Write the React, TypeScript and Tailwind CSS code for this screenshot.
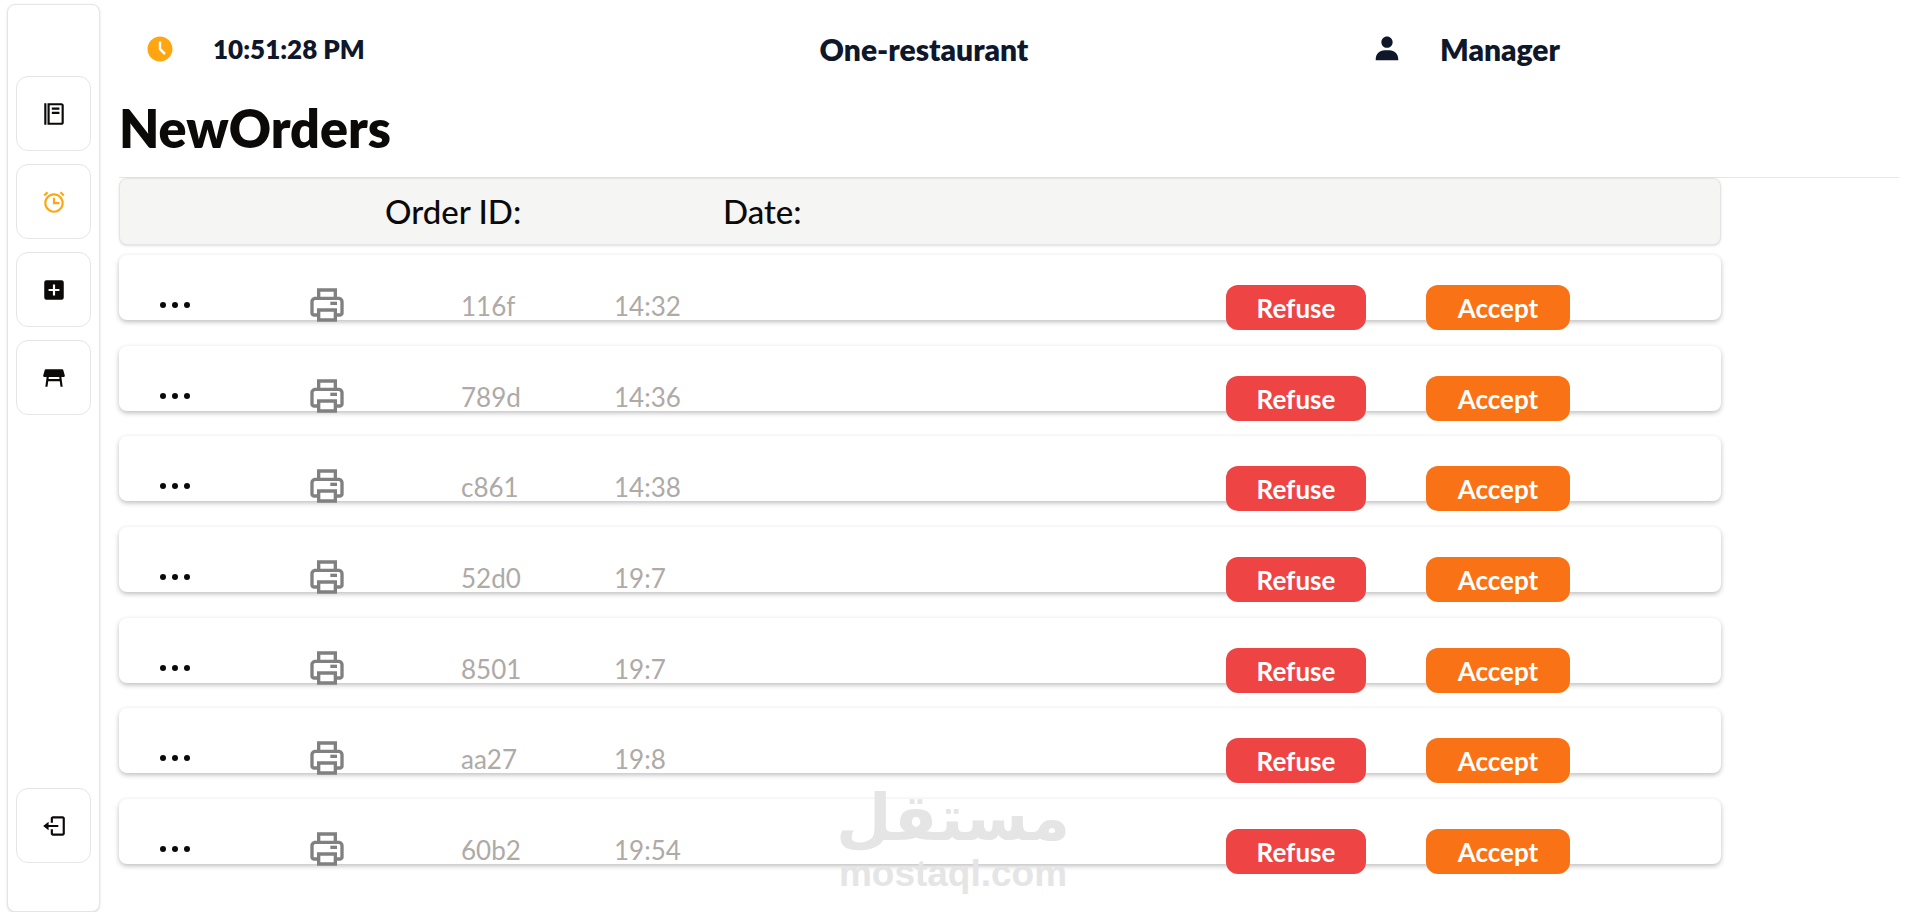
import React from 'react';
import {
  BiAlarm,
  BiFoodMenu,
  BiLogOut,
  BiPrinter,
  BiSolidPlusSquare,
  BiSolidTimeFive,
  BiSolidUser,
} from 'react-icons/bi';
import { MdTableRestaurant } from 'react-icons/md';

interface Order {
  id: string;
  time: string;
}

const ORDERS: Order[] = [
  { id: '116f', time: '14:32' },
  { id: '789d', time: '14:36' },
  { id: 'c861', time: '14:38' },
  { id: '52d0', time: '19:7' },
  { id: '8501', time: '19:7' },
  { id: 'aa27', time: '19:8' },
  { id: '60b2', time: '19:54' },
];

interface NavButtonProps {
  label: string;
  active?: boolean;
  className?: string;
  children: React.ReactNode;
}

const NavButton: React.FC<NavButtonProps> = ({ label, active, className = '', children }) => (
  <button
    type="button"
    aria-label={label}
    className={`flex h-[75px] w-[75px] items-center justify-center rounded-xl border border-neutral-200 bg-white ${active ? 'text-[#ffa50f]' : 'text-stone-950'} ${className}`}
  >
    {children}
  </button>
);

const Sidebar: React.FC = () => (
  <nav className="mt-1 ml-[7px] flex w-[93px] shrink-0 flex-col items-center gap-[13px] rounded-lg border border-neutral-200 bg-white pt-[71px] pb-12 shadow">
    <NavButton label="Menu"><BiFoodMenu size={26} /></NavButton>
    <NavButton label="New orders" active><BiAlarm size={26} /></NavButton>
    <NavButton label="Add order"><BiSolidPlusSquare size={26} /></NavButton>
    <NavButton label="Tables"><MdTableRestaurant size={26} /></NavButton>
    <NavButton label="Log out" className="mt-auto"><BiLogOut size={26} /></NavButton>
  </nav>
);

const Header: React.FC = () => (
  <header className="mr-[170px] grid h-[98px] grid-cols-[1fr_auto_1fr] items-center text-[30px] font-extrabold text-slate-900">
    <div className="flex items-center pl-[26px]">
      <BiSolidTimeFive size={30} className="text-[#ffa50f]" />
      <span className="ml-[38px] text-[26px]">10:51:28 PM</span>
    </div>
    <span>One-restaurant</span>
    <div className="flex items-center justify-end pr-[169px]">
      <BiSolidUser size={30} />
      <span className="ml-[38px]">Manager</span>
    </div>
  </header>
);

const OrderRow: React.FC<{ order: Order }> = ({ order }) => (
  <li className="flex h-[65px] items-start rounded-lg bg-white pt-[30px] pr-[151px] pl-10 text-[26px] shadow-[0_2px_5px_rgba(0,0,0,0.26)]">
    <button type="button" aria-label="Order details" className="flex h-10 w-8 items-center">
      <svg viewBox="0 0 32 8" className="h-2 w-8" fill="currentColor">
        <circle cx="4" cy="4" r="3" />
        <circle cx="16" cy="4" r="3" />
        <circle cx="28" cy="4" r="3" />
      </svg>
    </button>
    <button type="button" aria-label="Print order" className="ml-[116px] text-[#808080]">
      <BiPrinter size={40} />
    </button>
    <span className="ml-[114px] w-[153px] leading-[42px] text-[#aeaaa7]">{order.id}</span>
    <span className="leading-[42px] text-[#aeaaa7]">{order.time}</span>
    <button type="button" className="ml-auto h-[45px] w-[140px] rounded-xl bg-[#ef4444] pt-0.5 font-bold text-white">
      Refuse
    </button>
    <button type="button" className="ml-[60px] h-[45px] w-[144px] rounded-xl bg-[#f97316] pt-0.5 font-bold text-white">
      Accept
    </button>
  </li>
);

const Watermark: React.FC = () => (
  <div className="pointer-events-none absolute top-[778px] left-[838px] flex w-[230px] flex-col items-center whitespace-nowrap text-[#e5e5e5]">
    <span lang="ar" dir="rtl" className="font-['DejaVu_Sans'] text-[64px] leading-[80px] font-bold">مستقل</span>
    <span className="font-['Liberation_Sans'] text-[37px] leading-8 font-bold">mostaql.com</span>
  </div>
);

const App: React.FC = () => (
  <div className="relative flex min-h-screen bg-white font-['Lato',sans-serif] text-stone-950">
    <Sidebar />
    <main className="min-w-0 flex-1 pr-2 pl-[19px]">
      <Header />
      <h1 className="h-[80px] border-b border-neutral-200 text-[52px] leading-[60px] font-extrabold">NewOrders</h1>
      <section className="mr-[178px]">
        <div className="flex h-[67px] items-center rounded-lg border border-neutral-200 bg-stone-100 pl-[265px] text-[33px] font-medium shadow-sm">
          <span className="w-[338px]">Order ID:</span>
          <span>Date:</span>
        </div>
        <ul className="mt-[10px] flex h-[609px] flex-col justify-between">
          {ORDERS.map((order) => (
            <OrderRow key={order.id} order={order} />
          ))}
        </ul>
      </section>
    </main>
    <Watermark />
  </div>
);

export default App;
